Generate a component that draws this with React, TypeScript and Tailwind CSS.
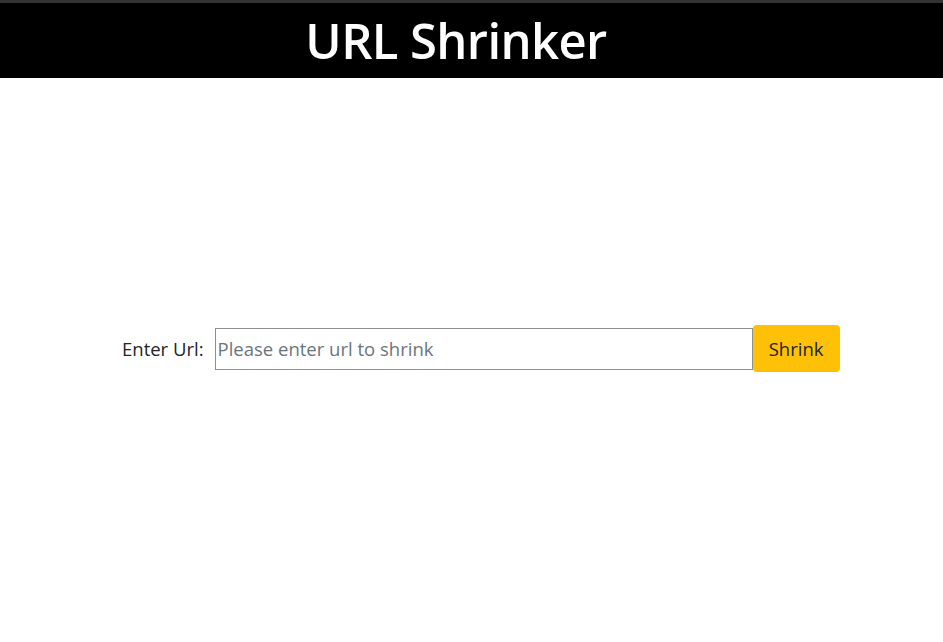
import React, { useState } from 'react';

const App = () => {
    const [url, setUrl] = useState('');

    return (
        <div className="min-h-screen w-full bg-white font-['Open_Sans',sans-serif]">
            {/* HEADER */}
            <header className="w-full border-t-[3px] border-[#333333] bg-black">
                <h1 className="flex h-[75px] items-center justify-center pr-[31px] text-[49px] font-semibold leading-none tracking-[-0.6px] text-white">
                    URL Shrinker
                </h1>
            </header>

            {/* FORM */}
            <main className="flex w-full justify-start pl-[122px] pt-[247px]">
                <form
                    className="flex items-center"
                    onSubmit={(e) => e.preventDefault()}
                >
                    <label htmlFor="url" className="mr-[11px] text-[18.5px] text-[#212529]">
                        Enter Url:
                    </label>
                    <input
                        id="url"
                        type="text"
                        value={url}
                        onChange={(e) => setUrl(e.target.value)}
                        placeholder="Please enter url to shrink"
                        className="h-[42px] w-[538px] border border-[#8f8f8f] px-[2px] text-[18.5px] text-[#212529] placeholder:text-[#6c757d] outline-none"
                    />
                    <button
                        type="submit"
                        className="h-[47px] w-[87px] rounded-[4px] bg-[#ffc107] text-[18.5px] text-[#212529]"
                    >
                        Shrink
                    </button>
                </form>
            </main>
        </div>
    );
};

export default App;
